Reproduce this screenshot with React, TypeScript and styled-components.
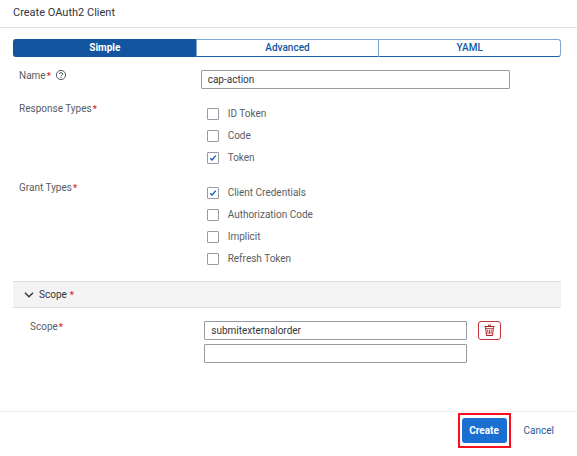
import React, { useState } from "react";
import styled, { createGlobalStyle, css } from "styled-components";

const GlobalStyle = createGlobalStyle`
  *, *::before, *::after { box-sizing: border-box; }
  body { margin: 0; background: #fff; }
  body, button, input { font-family: Roboto, "Liberation Sans", sans-serif; font-size: 10px; }
`;

const Dialog = styled.form`
  display: flex;
  flex-direction: column;
  min-height: 100vh;
  line-height: 14px;
  color: #5a5e63;
`;

const Header = styled.header`
  padding: 6px 13px 7px;
  border-bottom: 1px solid #dedfe0;
`;

const Title = styled.h1`
  margin: 0;
  font-size: 11px;
  font-weight: 400;
  line-height: 14px;
  color: #32363a;
`;

const Content = styled.main`
  flex: 1;
  padding: 11px 16px 0 13px;
`;

const Segments = styled.div`
  display: grid;
  grid-template-columns: repeat(3, 1fr);
  height: 18px;
`;

const Segment = styled.button<{ $active: boolean }>`
  padding: 0;
  border: 1px solid #7fa6d0;
  border-bottom-color: #1a63ab;
  border-right-width: 0;
  background: #fff;
  color: #0f57a3;
  font-weight: 500;
  line-height: 14px;
  &:first-child { border-radius: 3px 0 0 3px; }
  &:last-child { border-right-width: 1px; border-radius: 0 3px 3px 0; }
  ${({ $active }) => $active && css`
    border-color: #11569f;
    background: #11569f;
    color: #fff;
    font-weight: 700;
  `}
`;

const Row = styled.div<{ $top: number }>`
  display: grid;
  grid-template-columns: 37% 1fr;
  margin: ${({ $top }) => $top}px 51px 0 6px;
`;

const Label = styled.label`
  display: flex;
  align-items: center;
  align-self: start;
  gap: 1px;
  height: 12px;
`;

const Star = styled.span`
  color: #d4262a;
  font-size: 9px;
  font-weight: 700;
`;

const HelpButton = styled.button`
  display: flex;
  margin-left: 3px;
  padding: 0;
  border: 0;
  background: none;
  color: #43474b;
`;

const TextBox = styled.input`
  width: 100%;
  min-width: 0;
  height: 19px;
  padding: 0 6px;
  border: 1px solid #969ba4;
  border-radius: 1px;
  background: #fff;
  color: #32363a;
`;

const CheckList = styled.div`
  display: grid;
  gap: 8px;
  padding: 4px 0 0 6px;
`;

const CheckLabel = styled.label`
  display: flex;
  align-items: center;
  gap: 9px;
  height: 14px;
`;

const BoxCell = styled.span`
  display: grid;
  width: 12px;
  height: 12px;
  > * { grid-area: 1 / 1; }
  svg { pointer-events: none; }
`;

const CheckInput = styled.input`
  appearance: none;
  width: 12px;
  height: 12px;
  margin: 0;
  border: 1px solid #969ba4;
  border-radius: 1px;
  background: #fff;
`;

const PanelHeader = styled.button`
  display: flex;
  align-items: center;
  gap: 5px;
  width: 100%;
  height: 27px;
  margin-top: 15px;
  padding: 0 11px;
  border: solid #dedfe0;
  border-width: 1px 0;
  background: #f3f3f3;
  color: #32363a;
`;

const PanelTitle = styled.span`
  display: flex;
  align-items: center;
  gap: 3px;
`;

const ScopeRow = styled.div`
  display: grid;
  grid-template-columns: 37% 1fr;
  margin: 13px 60px 0 17px;
`;

const ScopeFields = styled.div`
  display: grid;
  grid-template-columns: 1fr 23px;
  gap: 4px 11px;
`;

const DeleteButton = styled.button`
  display: flex;
  align-items: center;
  justify-content: center;
  padding: 0;
  border: 1px solid #c3353a;
  border-radius: 3px;
  background: #fff;
  color: #b5161c;
`;

const Footer = styled.footer`
  display: flex;
  justify-content: flex-end;
  gap: 17px;
  padding: 6px 23px 13px;
  border-top: 1px solid #ededee;
`;

const CreateButton = styled.button`
  position: relative;
  width: 45px;
  height: 25px;
  padding: 0;
  border: 0;
  border-radius: 3px;
  background: #1a6fd0;
  color: #fff;
  font-weight: 700;
  &::after {
    content: "";
    position: absolute;
    inset: -5px -4px;
    border: 2px solid #fb0d1b;
  }
`;

const CancelButton = styled.button`
  padding: 0;
  border: 0;
  background: none;
  color: #1b5a9c;
`;

function Check({ label, initial = false }: { label: string; initial?: boolean }) {
  const [on, setOn] = useState(initial);
  return (
    <CheckLabel>
      <BoxCell>
        <CheckInput type="checkbox" checked={on} onChange={() => setOn(!on)} />
        {on && (
          <svg width="12" height="12" viewBox="0 0 12 12" fill="none" stroke="#1460b5" strokeWidth="1.4">
            <path d="M3.2 6.2 5 8 8.8 3.6" />
          </svg>
        )}
      </BoxCell>
      {label}
    </CheckLabel>
  );
}

export default function App() {
  const [mode, setMode] = useState("Simple");
  const [open, setOpen] = useState(true);
  return (
    <>
      <GlobalStyle />
      <Dialog onSubmit={(e) => e.preventDefault()}>
        <Header>
          <Title>Create OAuth2 Client</Title>
        </Header>
        <Content>
          <Segments>
            {["Simple", "Advanced", "YAML"].map((m) => (
              <Segment key={m} type="button" $active={m === mode} aria-pressed={m === mode} onClick={() => setMode(m)}>
                {m}
              </Segment>
            ))}
          </Segments>
          <Row $top={13}>
            <Label htmlFor="name">
              <span>Name</span>
              <Star>*</Star>
              <HelpButton type="button" aria-label="Help">
                <svg width="12" height="12" viewBox="0 0 12 12" fill="none" stroke="currentColor">
                  <circle cx="6" cy="5" r="4.6" strokeWidth="0.9" />
                  <path d="M4.5 4.1C4.5 2.2 7.6 2.2 7.6 4 7.6 5.2 6 5.1 6 6.3" strokeWidth="1" />
                  <path d="M6 7.1v1" strokeWidth="1.1" />
                </svg>
              </HelpButton>
            </Label>
            <TextBox id="name" defaultValue="cap-action" />
          </Row>
          <Row $top={14}>
            <Label as="span" id="responses">
              <span>Response Types</span>
              <Star>*</Star>
            </Label>
            <CheckList role="group" aria-labelledby="responses">
              <Check label="ID Token" />
              <Check label="Code" />
              <Check label="Token" initial />
            </CheckList>
          </Row>
          <Row $top={17}>
            <Label as="span" id="grants">
              <span>Grant Types</span>
              <Star>*</Star>
            </Label>
            <CheckList role="group" aria-labelledby="grants">
              <Check label="Client Credentials" initial />
              <Check label="Authorization Code" />
              <Check label="Implicit" />
              <Check label="Refresh Token" />
            </CheckList>
          </Row>
          <PanelHeader type="button" aria-expanded={open} onClick={() => setOpen(!open)}>
            <svg width="10" height="10" viewBox="0 0 10 10" fill="none" stroke="currentColor" strokeWidth="1.4">
              <path d="M1 2.8 5 6.8 9 2.8" />
            </svg>
            <PanelTitle>
              <span>Scope</span>
              <Star>*</Star>
            </PanelTitle>
          </PanelHeader>
          {open && (
            <ScopeRow>
              <Label htmlFor="scope">
                <span>Scope</span>
                <Star>*</Star>
              </Label>
              <ScopeFields>
                <TextBox id="scope" defaultValue="submitexternalorder" />
                <DeleteButton type="button" aria-label="Delete scope">
                  <svg width="11" height="13" viewBox="0 0 11 13" fill="none" stroke="currentColor">
                    <path d="M0.5 2.5h10M4 1.2h3" strokeWidth="1" />
                    <path d="M1.6 3.2 2.5 11.5h6L9.4 3.2" strokeWidth="1" />
                    <path d="M1.6 4.5h7.8" strokeWidth="0.7" />
                    <path d="M3.6 5.5 4.1 10M5.5 5.5V10M7.4 5.5 6.9 10" strokeWidth="0.8" />
                  </svg>
                </DeleteButton>
                <TextBox aria-label="Additional scope" />
              </ScopeFields>
            </ScopeRow>
          )}
        </Content>
        <Footer>
          <CreateButton type="submit">Create</CreateButton>
          <CancelButton type="button">Cancel</CancelButton>
        </Footer>
      </Dialog>
    </>
  );
}
